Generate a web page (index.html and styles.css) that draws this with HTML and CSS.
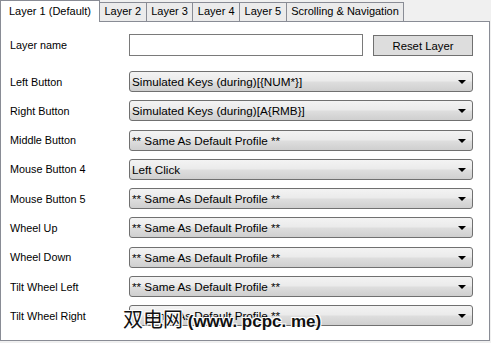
FILE: index.html
```html
<!DOCTYPE html>
<html lang="en">
<head>
  <meta charset="UTF-8">
  <title>Mouse Layers</title>
  <link rel="stylesheet" href="styles.css">
</head>
<body>
  <div class="window">
    <!-- Tabs -->
    <div class="tabs">
      <span class="tab active">Layer 1 (Default)</span>
      <span class="tab">Layer 2</span>
      <span class="tab">Layer 3</span>
      <span class="tab">Layer 4</span>
      <span class="tab">Layer 5</span>
      <span class="tab">Scrolling &amp; Navigation</span>
    </div>

    <!-- Panel -->
    <div class="panel">
      <div class="name-row">
        <span class="label">Layer name</span>
        <input type="text" class="name-input">
        <button type="button" class="reset-btn">Reset Layer</button>
      </div>

      <div class="rows">
        <div class="row"><span class="label">Left Button</span><div class="combo">Simulated Keys (during)[{NUM*}]</div></div>
        <div class="row"><span class="label">Right Button</span><div class="combo">Simulated Keys (during)[A{RMB}]</div></div>
        <div class="row"><span class="label">Middle Button</span><div class="combo">** Same As Default Profile **</div></div>
        <div class="row"><span class="label">Mouse Button 4</span><div class="combo">Left Click</div></div>
        <div class="row"><span class="label">Mouse Button 5</span><div class="combo">** Same As Default Profile **</div></div>
        <div class="row"><span class="label">Wheel Up</span><div class="combo">** Same As Default Profile **</div></div>
        <div class="row"><span class="label">Wheel Down</span><div class="combo">** Same As Default Profile **</div></div>
        <div class="row"><span class="label">Tilt Wheel Left</span><div class="combo">** Same As Default Profile **</div></div>
        <div class="row"><span class="label">Tilt Wheel Right</span><div class="combo">** Same As Default Profile **</div></div>
      </div>
    </div>

    <div class="watermark"><span class="wm-cn">双电网</span> (www. pcpc. me)</div>
  </div>
</body>
</html>
```

FILE: styles.css
```css
body {
  margin: 0;
  background: #f0f0f0;
  font-family: "Liberation Sans", Arial, sans-serif;
  font-size: 11px;
  color: #000;
}

.window {
  position: relative;
  width: 490px;
}

.tabs {
  display: flex;
  align-items: flex-end;
  height: 21px;
}

.tab {
  box-sizing: border-box;
  height: 19px;
  line-height: 17px;
  padding: 0 4.5px;
  margin-left: -1px;
  background: #ebebeb;
  border: 1px solid #898c95;
  border-bottom: none;
  white-space: nowrap;
}

.tab.active {
  position: relative;
  z-index: 1;
  height: 22px;
  line-height: 20px;
  margin-left: 0;
  margin-bottom: -1px;
  margin-right: -1px;
  padding: 0 8px;
  background: #fff;
}

.tab.active + .tab {
  margin-left: 0;
}

.panel {
  box-sizing: border-box;
  height: 320px;
  background: #fff;
  border: 1px solid #898c95;
  padding: 12px 0 0 9px;
}

.label {
  width: 119px;
  flex-shrink: 0;
  font-size: 10.8px;
}

.name-row {
  display: flex;
  align-items: center;
  height: 22px;
}

.name-input {
  box-sizing: border-box;
  width: 234px;
  height: 22px;
  margin: 0;
  border: 1px solid #7a7a7a;
  background: #fff;
}

.reset-btn {
  box-sizing: border-box;
  width: 100px;
  height: 21px;
  margin: 1px 0 0 10px;
  padding: 0;
  font: inherit;
  font-size: 11.3px;
  background: #dddddd;
  border: 1px solid #707070;
}

.rows {
  display: flex;
  flex-direction: column;
  gap: 8.3px;
  margin-top: 15px;
}

.row {
  display: flex;
  align-items: center;
  height: 21px;
}

.combo {
  position: relative;
  box-sizing: border-box;
  width: 344px;
  height: 21px;
  line-height: 19px;
  padding-left: 2px;
  font-size: 11.7px;
  border: 1px solid #707070;
  border-radius: 3px;
  background: linear-gradient(#f3f3f3 0%, #ebebeb 45%, #dddddd 55%, #cfcfcf 100%);
  white-space: nowrap;
  overflow: hidden;
}

.combo::after {
  content: "";
  position: absolute;
  right: 6px;
  top: 8px;
  border-left: 4px solid transparent;
  border-right: 4px solid transparent;
  border-top: 4px solid #000;
}

.watermark {
  position: absolute;
  left: 123px;
  top: 304px;
  font-family: "Liberation Sans", "Noto Sans CJK SC", sans-serif;
  font-size: 17px;
  font-weight: bold;
  color: #111;
  text-shadow: 1px 1px 0 #fff, -1px -1px 0 #fff, 1px -1px 0 #fff, -1px 1px 0 #fff;
  white-space: nowrap;
}

.wm-cn {
  font-family: "Noto Sans CJK SC", sans-serif;
  font-size: 20px;
  font-weight: normal;
}
```
